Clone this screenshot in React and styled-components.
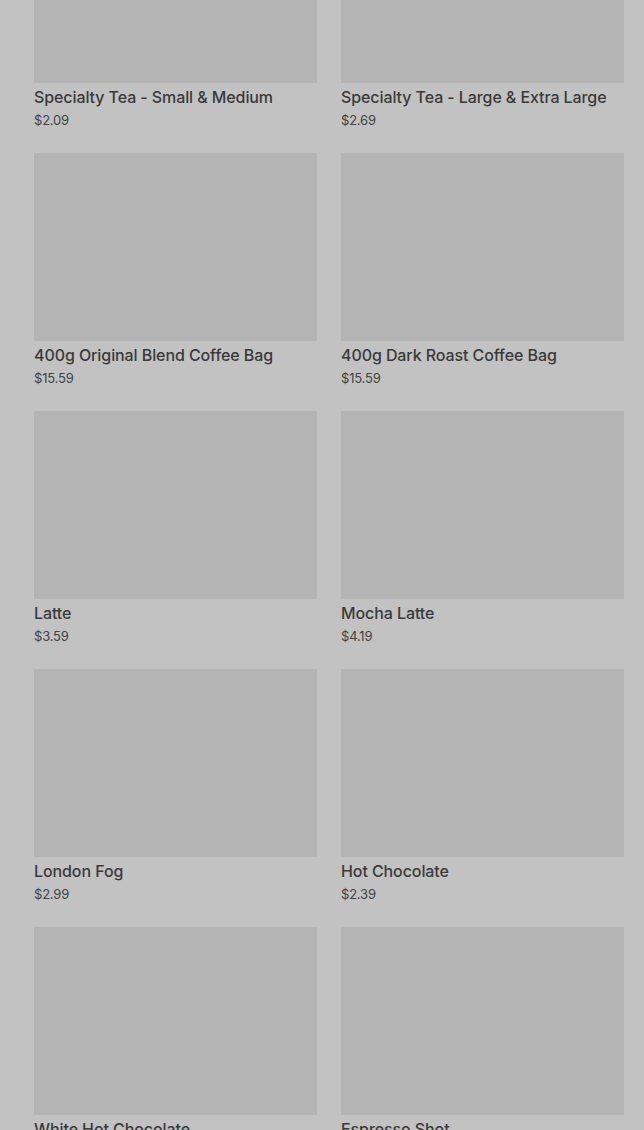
import React from "react";
import styled, { createGlobalStyle } from "styled-components";

const Global = createGlobalStyle`
  html, body { margin: 0; padding: 0; background: #c2c2c2; overflow: hidden; }
  body { font-family: Inter, "Liberation Sans", sans-serif; }
`;

const Page = styled.div`
  width: 644px;
  height: 1130px;
  overflow: hidden;
  background: #c2c2c2;
`;

const Grid = styled.div`
  display: grid;
  grid-template-columns: 283px 283px;
  column-gap: 24px;
  row-gap: 24px;
  padding: 0 20px 0 34px;
  margin-top: -105px;
`;

const Card = styled.div`
  display: flex;
  flex-direction: column;
`;

const Thumb = styled.div`
  height: 188px;
  background: #b4b4b4;
`;

const Title = styled.div`
  margin-top: 3px;
  font-size: 16px;
  line-height: 22px;
  font-weight: 500;
  letter-spacing: -0.09px;
  color: #3a3a3a;
  white-space: nowrap;
`;

const Price = styled.div`
  margin-top: 3px;
  font-size: 13px;
  line-height: 18px;
  letter-spacing: -0.2px;
  color: #424242;
`;

const items = [
  ["Specialty Tea - Small & Medium", "$2.09"],
  ["Specialty Tea - Large & Extra Large", "$2.69"],
  ["400g Original Blend Coffee Bag", "$15.59"],
  ["400g Dark Roast Coffee Bag", "$15.59"],
  ["Latte", "$3.59"],
  ["Mocha Latte", "$4.19"],
  ["London Fog", "$2.99"],
  ["Hot Chocolate", "$2.39"],
  ["White Hot Chocolate", "$2.99"],
  ["Espresso Shot", "$1.29"],
];

export default function App() {
  return (
    <Page>
      <Global />
      <Grid>
        {items.map(([name, price]) => (
          <Card key={name}>
            <Thumb />
            <Title>{name}</Title>
            <Price>{price}</Price>
          </Card>
        ))}
      </Grid>
    </Page>
  );
}
